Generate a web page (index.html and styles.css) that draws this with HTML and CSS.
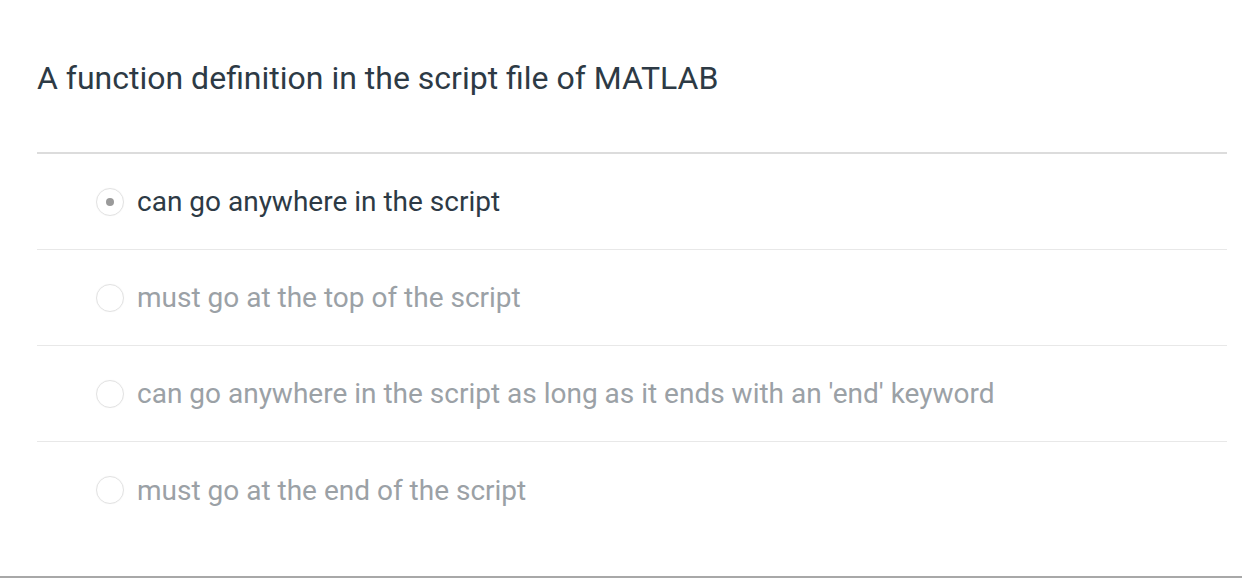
FILE: index.html
```html
<!DOCTYPE html>
<html>
<head>
<meta charset="utf-8">
<link rel="stylesheet" href="styles.css">
</head>
<body>
<div class="page">
  <h1 class="question">A function definition in the script file of MATLAB</h1>
  <ul class="options">
    <li class="option selected"><span class="radio"><span class="dot"></span></span><span class="label">can go anywhere in the script</span></li>
    <li class="option"><span class="radio"></span><span class="label">must go at the top of the script</span></li>
    <li class="option"><span class="radio"></span><span class="label">can go anywhere in the script as long as it ends with an 'end' keyword</span></li>
    <li class="option"><span class="radio"></span><span class="label">must go at the end of the script</span></li>
  </ul>
</div>
</body>
</html>
```
FILE: styles.css
```css
html, body {
  margin: 0;
  padding: 0;
  background: #fff;
}
body {
  font-family: Roboto, "Liberation Sans", sans-serif;
  width: 1242px;
  height: 580px;
  overflow: hidden;
}
.page {
  height: 576px;
  border-bottom: 2px solid #a8a8a8;
  padding: 0 15px 0 37px;
}
.question {
  margin: 0;
  padding-top: 58px;
  box-sizing: border-box;
  font-size: 32px;
  font-weight: 400;
  line-height: 40px;
  color: #2d3a45;
  border-bottom: 2px solid #dcdcdc;
  height: 154px;
}
.options {
  list-style: none;
  margin: 0;
  padding: 0;
}
.option {
  height: 96px;
  display: flex;
  align-items: center;
  padding-left: 59px;
  border-bottom: 1px solid #e8e8e8;
  box-sizing: border-box;
}
.option:last-child {
  border-bottom: none;
}
.radio {
  width: 26px;
  height: 26px;
  border-radius: 50%;
  border: 1px solid #e2e2e2;
  box-shadow: 0 0 1px rgba(0,0,0,0.08);
  display: flex;
  align-items: center;
  justify-content: center;
  margin-right: 13px;
  flex: none;
}
.dot {
  width: 8px;
  height: 8px;
  border-radius: 50%;
  background: #9a9a9a;
}
.label {
  font-size: 28px;
  color: #9ba1a6;
}
.selected .label {
  color: #2d3a45;
}
```
